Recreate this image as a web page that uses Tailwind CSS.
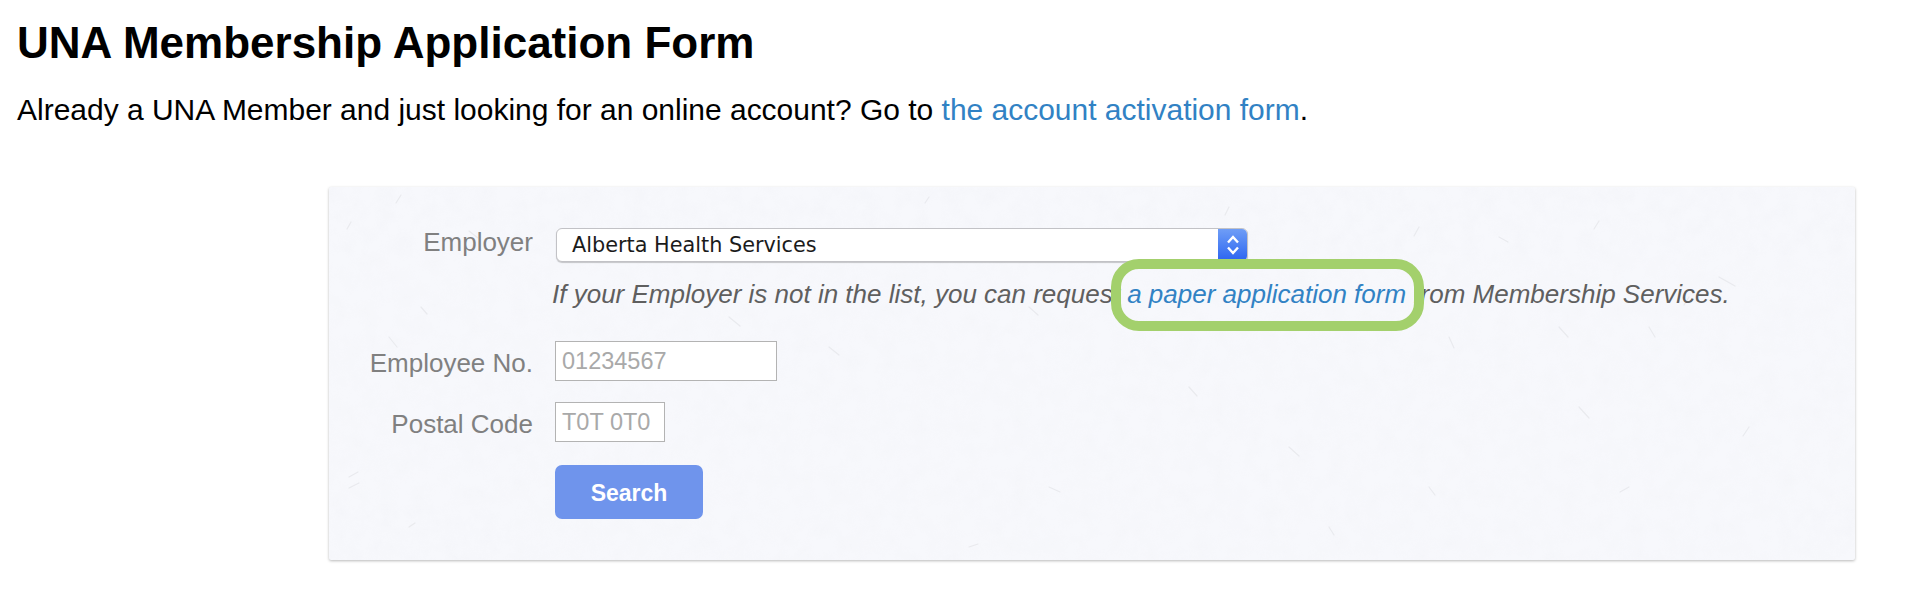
<!DOCTYPE html>
<html>
<head>
<meta charset="utf-8">
<script src="https://cdn.jsdelivr.net/npm/@tailwindcss/browser@4"></script>
</head>
<body class="bg-white font-['Liberation_Sans',Arial,sans-serif] text-black overflow-hidden">
<div class="relative w-[1928px] h-[608px] pt-[21px]">
  <h1 class="ml-[17px] text-[44px] leading-[44px] font-bold">UNA Membership Application Form</h1>
  <p class="ml-[17px] mt-[27px] text-[29.97px] leading-[36px]">Already a UNA Member and just looking for an online account? Go to <a class="text-[#3182c4]">the account activation form</a>.</p>
  <section class="relative ml-[329px] mt-[59px] w-[1526px] h-[373px] overflow-hidden rounded-[2px] bg-[#f7f8fc] pt-[41px] shadow-[0_1px_3px_rgba(0,0,0,0.28)]">
    <svg class="absolute inset-0 h-full w-full" viewBox="0 0 1526 373" fill="none" stroke="#e9eaee" stroke-width="1.2" stroke-linecap="round" aria-hidden="true">
      <filter id="n"><feTurbulence type="fractalNoise" baseFrequency="0.06" numOctaves="4" seed="4"/><feColorMatrix values="0 0 0 0 0.8 0 0 0 0 0.8 0 0 0 0 0.82 0.5 0 0 0 -0.16"/></filter>
      <rect width="1526" height="373" filter="url(#n)" opacity="0.35"/>
      <path d="M72 8l-5 8M18 42l4 -7M140 44l9 7M60 150l8 10M20 290l9 -5M30 296l-10 5M92 120l6 7M600 10l-4 6M700 120l9 8M900 20l-4 8M1090 40l-5 9M1270 34l-5 8M1170 50l9 5M1320 140l6 10M1360 110l-5 8M1390 90l16 9M1230 140l9 10M1120 150l5 11M1250 220l10 11M1420 240l-6 9M400 130l11 9M500 160l10 8M860 200l8 9M960 260l10 9M1100 300l6 8M720 300l11 5M1300 300l-9 5M240 320l9 5M180 230l5 5M80 340l6 -4M640 360l9 -3M1000 340l5 8"/>
    </svg>
    <form class="relative flex flex-col">
      <div class="flex items-start">
        <label class="w-[204px] text-right text-[26px] leading-[34px] text-[#808080] -mt-[3px]">Employer</label>
        <div class="relative ml-[23px] flex h-[34px] w-[692px] overflow-hidden rounded-[6px] border border-[#c2c2c6] bg-white shadow-[0_1px_1px_rgba(0,0,0,0.2)]">
          <div class="flex flex-1 items-center pl-[15px] pt-[1px] font-['DejaVu_Sans',sans-serif] text-[20.8px] text-[#1b1b1b]">Alberta Health Services</div>
          <div class="flex w-[29px] items-center justify-center bg-gradient-to-b from-[#6f9df6] to-[#2c63f0]">
            <svg width="16" height="26" viewBox="0 0 16 26" fill="none" stroke="#fff" stroke-width="2.4"><path d="M3 10.5L8 5L13 10.5M3 15.5L8 21L13 15.5"/></svg>
          </div>
        </div>
      </div>
      <p class="ml-[223px] mt-[14px] text-[26px] leading-[36px] italic text-[#5f5f5f] whitespace-nowrap">If your Employer is not in the list, you can request <a class="text-[#3182c4]">a paper application form</a> from Membership Services.</p>
      <div class="mt-[29px] flex items-start">
        <label class="h-[40px] w-[204px] pt-[3px] text-right text-[26px] leading-[38px] text-[#808080]">Employee No.</label>
        <input class="ml-[22px] h-[40px] w-[222px] border border-[#b3b3b3] bg-white px-[6px] text-[23.5px] placeholder:text-[#a9a9a9]" placeholder="01234567">
      </div>
      <div class="mt-[21px] flex items-start">
        <label class="h-[40px] w-[204px] pt-[3px] text-right text-[26px] leading-[38px] text-[#808080]">Postal Code</label>
        <input class="ml-[22px] h-[40px] w-[110px] border border-[#b3b3b3] bg-white px-[6px] text-[23.5px] placeholder:text-[#a9a9a9]" placeholder="T0T 0T0">
      </div>
      <div class="mt-[23px] pl-[226px]">
        <button type="button" class="h-[54px] w-[148px] rounded-[7px] bg-[#6f94ec] pt-[2px] text-[23px] font-bold text-white">Search</button>
      </div>
    </form>
  </section>
  <div class="absolute left-[1111px] top-[259px] h-[72px] w-[313px] rounded-[28px] border-[10px] border-[#a3d06c]"></div>
</div>
</body>
</html>
